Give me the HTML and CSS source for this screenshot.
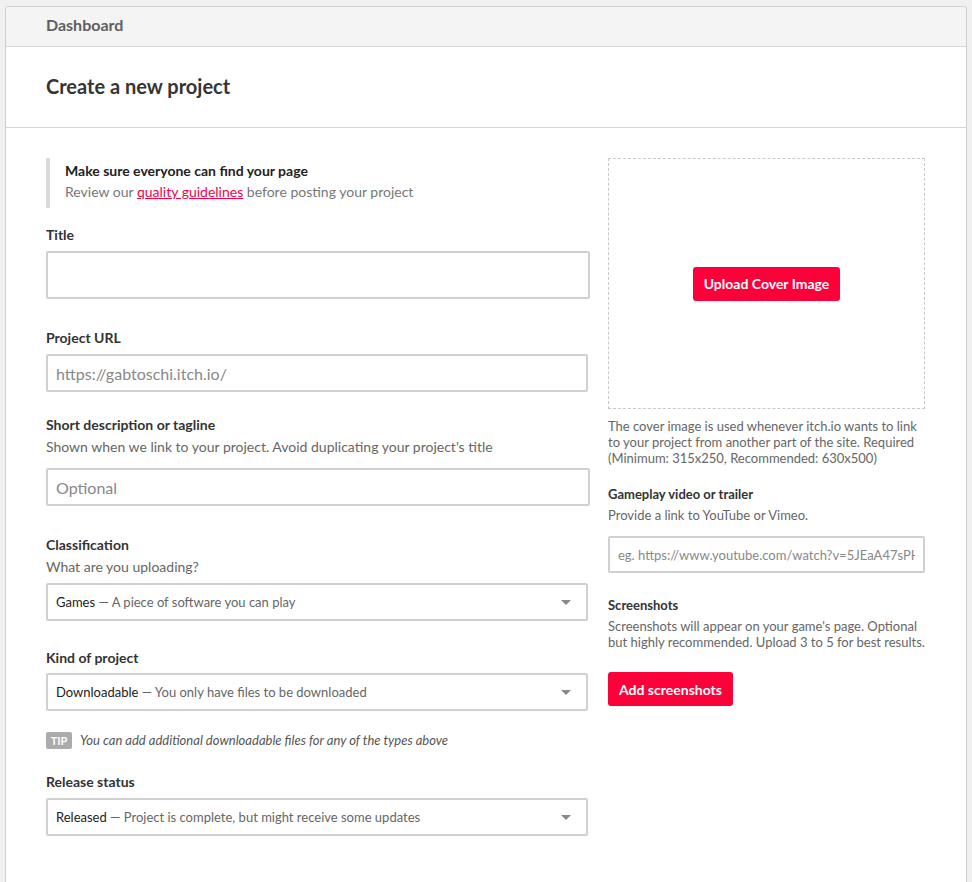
FILE: index.html
```html
<!DOCTYPE html>
<html lang="en">
<head>
<meta charset="utf-8">
<title>Create a new project</title>
<link rel="stylesheet" href="styles.css">
</head>
<body>
<div class="card">
  <div class="crumbs">Dashboard</div>
  <div class="page-head"><h1>Create a new project</h1></div>
  <div class="form-body">
    <div class="left-col">
      <div class="callout">
        <div class="callout-title">Make sure everyone can find your page</div>
        <div class="callout-sub">Review our <a href="#">quality guidelines</a> before posting your project</div>
      </div>

      <div class="field f-title">
        <div class="label">Title</div>
        <input class="text-input big" type="text">
      </div>

      <div class="field f-url">
        <div class="label">Project URL</div>
        <input class="text-input narrow" type="text" placeholder="https://gabtoschi.itch.io/">
      </div>

      <div class="field f-short">
        <div class="label">Short description or tagline</div>
        <div class="help">Shown when we link to your project. Avoid duplicating your project's title</div>
        <input class="text-input short-input" type="text" placeholder="Optional">
      </div>

      <div class="field f-class">
        <div class="label">Classification</div>
        <div class="help">What are you uploading?</div>
        <div class="select"><span class="opt-main">Games</span><span class="opt-sub"> — A piece of software you can play</span><span class="caret"></span></div>
      </div>

      <div class="field f-kind">
        <div class="label">Kind of project</div>
        <div class="select"><span class="opt-main">Downloadable</span><span class="opt-sub"> — You only have files to be downloaded</span><span class="caret"></span></div>
      </div>

      <div class="tip-row"><span class="tip">TIP</span><em>You can add additional downloadable files for any of the types above</em></div>

      <div class="field f-release">
        <div class="label">Release status</div>
        <div class="select"><span class="opt-main">Released</span><span class="opt-sub"> — Project is complete, but might receive some updates</span><span class="caret"></span></div>
      </div>
    </div>

    <div class="right-col">
      <div class="cover-drop"><button class="btn">Upload Cover Image</button></div>
      <p class="small-text cover-note">The cover image is used whenever itch.io wants to link to your project from another part of the site. Required (Minimum: 315x250, Recommended: 630x500)</p>

      <div class="r-label video-label">Gameplay video or trailer</div>
      <div class="r-help">Provide a link to YouTube or Vimeo.</div>
      <input class="text-input video-input" type="text" placeholder="eg. https://www.youtube.com/watch?v=5JEaA47sPHk">

      <div class="r-label shots-label">Screenshots</div>
      <p class="small-text shots-note">Screenshots will appear on your game's page. Optional but highly recommended. Upload 3 to 5 for best results.</p>
      <button class="btn shots-btn">Add screenshots</button>
    </div>
  </div>
</div>
</body>
</html>
```

FILE: styles.css
```css
* { box-sizing: border-box; }

html, body {
  margin: 0;
  padding: 0;
  background: #f0f0f0;
  font-family: Lato, "Open Sans", sans-serif;
  color: #333;
}

body {
  padding: 6px 5px 0 5px;
}

.card {
  background: #fff;
  border: 1px solid #d0d0d0;
  border-bottom: none;
  border-radius: 3px 3px 0 0;
  min-height: 880px;
}

.crumbs {
  background: #f4f4f4;
  border-bottom: 1px solid #d6d6d6;
  padding: 8px 40px 11px;
  font-size: 16px;
  line-height: 20px;
  font-weight: 700;
  color: #606060;
  border-radius: 3px 3px 0 0;
}

.page-head {
  border-bottom: 1px solid #d6d6d6;
  padding: 27px 40px 29px;
}

.page-head h1 {
  margin: 0;
  font-size: 20px;
  line-height: 24px;
  font-weight: 700;
  color: #353535;
}

.form-body {
  display: flex;
  gap: 18px;
  padding: 30px 41px 0 40px;
}

.left-col {
  width: 544px;
  flex: none;
}

.right-col {
  width: 317px;
  flex: none;
}

.callout {
  border-left: 4px solid #dadada;
  padding: 2px 0 6px 15px;
  font-size: 14px;
  line-height: 21px;
}

.callout-title {
  font-weight: 700;
  color: #222;
}

.callout-sub {
  color: #777;
}

.callout-sub a {
  color: #fa0045;
  text-decoration: underline;
}

.label {
  font-size: 14px;
  line-height: 20px;
  font-weight: 700;
  color: #333;
  margin-bottom: 6px;
}

.help {
  font-size: 14px;
  line-height: 22px;
  color: #666;
  margin-top: -5px;
}

.f-title { margin-top: 17px; }
.f-url { margin-top: 29px; }
.f-short { margin-top: 23px; }
.f-class { margin-top: 29px; }
.f-kind { margin-top: 27px; }
.f-release { margin-top: 23px; }

.f-short .help { margin-bottom: 10px; }
.f-class .help { margin-bottom: 5px; }
.f-kind .label { margin-bottom: 5px; }

.text-input {
  display: block;
  width: 544px;
  height: 38px;
  border: 2px solid #d0d0d0;
  border-radius: 2px;
  padding: 0 8px;
  font-family: Lato, "Open Sans", sans-serif;
  font-size: 16px;
  color: #333;
  background: #fff;
  outline: none;
}

.text-input::placeholder {
  color: #888;
}

.text-input.big {
  height: 48px;
  font-size: 20px;
}

.text-input.narrow {
  width: 542px;
}

.select {
  position: relative;
  width: 542px;
  height: 38px;
  border: 2px solid #d0d0d0;
  border-radius: 2px;
  padding: 0 8px;
  display: flex;
  align-items: center;
  font-size: 13px;
  white-space: pre;
}

.opt-main { color: #222; }
.opt-sub { color: #666; }

.caret {
  position: absolute;
  right: 15px;
  top: 15px;
  width: 0;
  height: 0;
  border-left: 5px solid transparent;
  border-right: 5px solid transparent;
  border-top: 5px solid #888;
}

.tip-row {
  margin-top: 20px;
  display: flex;
  align-items: center;
  gap: 8px;
  font-size: 13px;
  line-height: 18px;
  color: #555;
}

.tip {
  display: inline-block;
  background: #ababab;
  color: #fff;
  font-weight: 700;
  font-size: 11px;
  line-height: 17px;
  width: 26px;
  text-align: center;
  border-radius: 2px;
}

.tip-row em { font-style: italic; }

.cover-drop {
  height: 251px;
  border: 1px dashed #c8c8c8;
  display: flex;
  align-items: center;
  justify-content: center;
}

.btn {
  font-family: Lato, "Open Sans", sans-serif;
  background: #fe0039;
  color: #fff;
  border: none;
  border-radius: 3px;
  font-size: 14px;
  font-weight: 700;
  height: 34px;
  padding: 0 11px;
}

.small-text {
  margin: 0;
  font-size: 13px;
  line-height: 16px;
  color: #666;
}

.cover-note { margin-top: 9px; }

.r-label {
  font-size: 13px;
  line-height: 20px;
  font-weight: 700;
  color: #333;
}

.video-label { margin-top: 18px; }

.r-help {
  font-size: 13px;
  line-height: 20px;
  color: #666;
  margin-top: 1px;
}

.video-input {
  width: 317px;
  height: 37px;
  margin-top: 11px;
  font-size: 13px;
}

.shots-label { margin-top: 22px; }

.shots-note { margin-top: 3px; }

.shots-btn { margin-top: 22px; }
```
